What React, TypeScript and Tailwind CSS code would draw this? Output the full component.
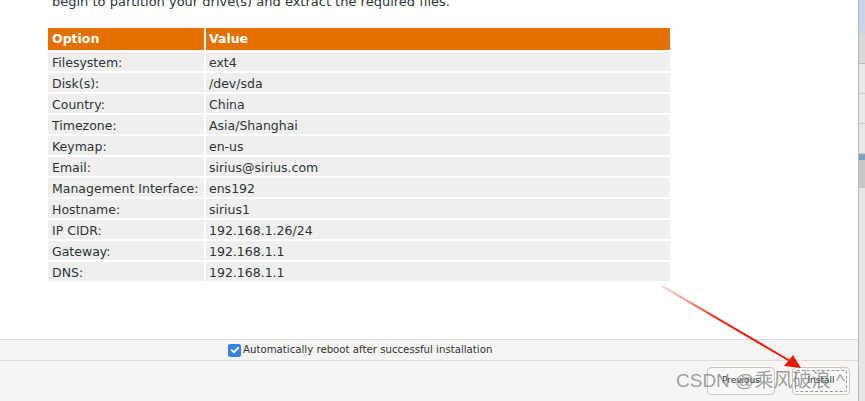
import React from "react";

const rows: [string, string][] = [
  ["Filesystem:", "ext4"],
  ["Disk(s):", "/dev/sda"],
  ["Country:", "China"],
  ["Timezone:", "Asia/Shanghai"],
  ["Keymap:", "en-us"],
  ["Email:", "sirius@sirius.com"],
  ["Management Interface:", "ens192"],
  ["Hostname:", "sirius1"],
  ["IP CIDR:", "192.168.1.26/24"],
  ["Gateway:", "192.168.1.1"],
  ["DNS:", "192.168.1.1"],
];

export default function App() {
  const font = { fontFamily: '"DejaVu Sans", "Noto Sans CJK SC", sans-serif' };
  return (
    <div className="relative w-[865px] h-[401px] overflow-hidden bg-white flex" style={font}>
      <div className="flex flex-col w-[858px] h-full">
        <div className="flex-1 bg-white">
          <div className="h-[10px] overflow-hidden pl-[52px]">
            <div className="-mt-[6px] text-[13px] leading-[16px] text-[#2e3436]">
              begin to partition your drive(s) and extract the required files.
            </div>
          </div>
          <div className="ml-[48px] mt-[18px] grid grid-cols-[156px_464px] gap-[2px] text-[12.5px] text-[#2e3436]">
            <div className="h-[22px] bg-[#e57000] text-white font-bold flex items-center pl-[4px]">Option</div>
            <div className="h-[22px] bg-[#e57000] text-white font-bold flex items-center pl-[3px]">Value</div>
            {rows.map(([k, v]) => (
              <React.Fragment key={k}>
                <div className="h-[19px] bg-[#efefef] flex items-center pt-[3px] pl-[4px] whitespace-nowrap">{k}</div>
                <div className="h-[19px] bg-[#efefef] flex items-center pt-[3px] pl-[3px]">{v}</div>
              </React.Fragment>
            ))}
          </div>
        </div>
        <div className="h-[22px] bg-[#f5f4f2] border-t border-b border-[#dedcda] flex items-center pl-[228px]">
          <div className="w-[13px] h-[13px] rounded-[2px] bg-[#3584e4] flex items-center justify-center">
            <svg width="10" height="10" viewBox="0 0 10 10">
              <path d="M1.8 5.2 L4 7.3 L8.3 2.6" stroke="white" strokeWidth="1.8" fill="none" strokeLinecap="round" strokeLinejoin="round" />
            </svg>
          </div>
          <span className="ml-[2px] text-[10.2px] text-[#333]">Automatically reboot after successful installation</span>
        </div>
        <div className="h-[40px] bg-[#f6f5f4] flex items-center justify-end pr-[8px] gap-[17px]">
          <div className="w-[68px] h-[28px] rounded-[4px] border border-[#cdc7c2] bg-[#f8f8f7] flex items-center justify-center text-[9px] text-[#2e3436]">
            Previous
          </div>
          <div className="w-[58px] h-[28px] rounded-[4px] border border-[#cdc7c2] bg-[#f8f8f7] flex items-center justify-center p-[2px]">
            <div className="w-full h-full border border-dashed border-[#999] rounded-[2px] flex items-center justify-center text-[9px] text-[#2e3436]">
              Install
            </div>
          </div>
        </div>
      </div>
      <div className="w-[7px] h-full border-l border-[#b8b8b8] bg-[#e4e4e4] flex flex-col">
        <div className="h-[34px] bg-[#c9d6e3]" />
        <div className="h-[30px] bg-[#d9d9d9] border-b border-[#bbb]" />
        <div className="h-[30px] bg-[#e8e8e8] border-b border-[#ccc]" />
        <div className="h-[30px] bg-[#e8e8e8] border-b border-[#ccc]" />
        <div className="h-[30px] bg-[#e8e8e8] border-b border-[#ccc]" />
        <div className="h-[6px] bg-[#7fa0c0]" />
        <div className="h-[28px] bg-[#c8c8c8]" />
        <div className="flex-1 bg-[#e6e6e6]" />
      </div>
      {/* watermark */}
      <div className="absolute left-[676px] top-[369px] text-[19px] leading-[24px] text-[#777]/70 whitespace-nowrap pointer-events-none" style={{ fontFamily: '"Liberation Sans", "Noto Sans CJK SC", sans-serif' }}>
        CSDN @乘风破浪 ^
      </div>
      {/* red arrow */}
      <svg className="absolute left-0 top-0 pointer-events-none" width="865" height="401">
        <defs>
          <linearGradient id="g" x1="662" y1="286" x2="800" y2="366" gradientUnits="userSpaceOnUse">
            <stop offset="0" stopColor="#ff3b2f" stopOpacity="0.2" />
            <stop offset="0.4" stopColor="#f02010" />
            <stop offset="1" stopColor="#e81808" />
          </linearGradient>
        </defs>
        <line x1="662" y1="286" x2="790" y2="361" stroke="url(#g)" strokeWidth="2" />
        <polygon points="801,368 784,366 793,355" fill="#e81808" />
      </svg>
    </div>
  );
}
